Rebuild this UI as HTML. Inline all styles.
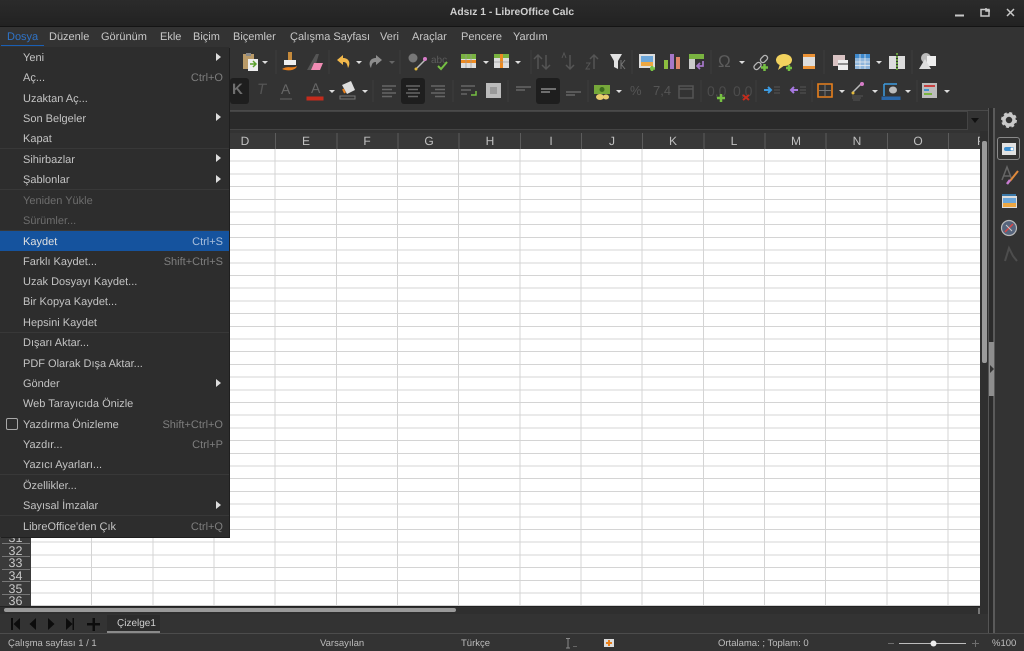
<!DOCTYPE html>
<html lang="tr"><head><meta charset="utf-8"><title>Adsız 1 - LibreOffice Calc</title>
<style>
html,body{margin:0;padding:0;width:1024px;height:651px;overflow:hidden;background:#333}
body{position:relative;font-family:"Liberation Sans",sans-serif;font-size:11px;color:#d0d0d0;text-rendering:geometricPrecision}
.a{position:absolute}
.t{position:absolute;white-space:nowrap;line-height:14px}
.m{position:absolute;top:27px;line-height:20px;font-size:11px;color:#c8c8c8;white-space:nowrap}
.i{position:absolute;left:23px;line-height:14px;font-size:11px;margin-top:1px;color:#c4c4c4;white-space:nowrap}
.k{position:absolute;right:801px;line-height:14px;font-size:11px;margin-top:1px;color:#7e7e7e;white-space:nowrap}
.d{color:#6d6d6d}
.ar{position:absolute;left:216px;width:0;height:0;border-left:5px solid #ddd;border-top:4px solid transparent;border-bottom:4px solid transparent}
.sep{position:absolute;left:0;width:229px;height:1px;background:#383838}
.dd{position:absolute;width:0;height:0;border-top:3px solid #ddd;border-left:3px solid transparent;border-right:3px solid transparent}
.ch{position:absolute;top:133px;height:16px;line-height:17px;text-align:center;color:#c0c0c0;font-size:12px;width:60px}
.rn{position:absolute;left:2px;width:27px;text-align:center;font-size:12.500px;color:#c8c8c8;line-height:12px}
.st{position:absolute;top:637px;line-height:13px;font-size:9.500px;color:#bdbdbd;white-space:nowrap}
svg{position:absolute;overflow:visible}
</style></head><body>

<!-- title bar -->
<div class="a" style="left:0;top:0;width:1024px;height:26px;background:linear-gradient(#2b2b2b,#222)"></div>
<div class="a" style="left:0;top:26px;width:1024px;height:1px;background:#141414"></div>
<div class="t" style="left:0;width:1024px;text-align:center;top:6px;font-weight:bold;font-size:10.300px;color:#cfcfcf">Adsız 1 - LibreOffice Calc</div>
<svg style="left:0;top:0" width="1024" height="46" fill="none" stroke="#c8c8c8">
<path d="M955 15.500H964" stroke-width="2"/>
<path d="M981 9.500H989V16H981ZM986 8V11H990" stroke-width="1.500"/>
<path d="M1007 9L1014 16M1014 9L1007 16" stroke-width="1.500"/>
<path d="M1007.500 34L1013.500 40M1013.500 34L1007.500 40" stroke-width="2" stroke="#ddd"/>
</svg>

<!-- menubar -->
<div class="a" style="left:0;top:27px;width:1024px;height:20px;background:#333"></div>
<div class="a" style="left:1px;top:45px;width:43px;height:1px;background:#1a5fb4"></div>
<div class="m" style="left:7px;color:#2f74c8">Dosya</div>
<div class="m" style="left:49px">Düzenle</div>
<div class="m" style="left:101px">Görünüm</div>
<div class="m" style="left:160px">Ekle</div>
<div class="m" style="left:193px">Biçim</div>
<div class="m" style="left:233px">Biçemler</div>
<div class="m" style="left:290px">Çalışma Sayfası</div>
<div class="m" style="left:380px">Veri</div>
<div class="m" style="left:412px">Araçlar</div>
<div class="m" style="left:461px">Pencere</div>
<div class="m" style="left:513px">Yardım</div>

<!-- toolbars -->
<div class="a" style="left:0;top:76px;width:1024px;height:1px;background:#333"></div>
<div class="a" style="left:230px;top:110px;width:794px;height:1px;background:#4a4a4a"></div>
<div class="a" style="left:230px;top:78px;width:19px;height:26px;background:#1e1e1e;border-radius:3px"></div>
<div class="a" style="left:401px;top:78px;width:24px;height:26px;background:#1e1e1e;border-radius:3px"></div>
<div class="a" style="left:536px;top:78px;width:24px;height:26px;background:#1e1e1e;border-radius:3px"></div>
<div class="t" style="left:232px;top:83px;font-size:15px;font-weight:bold;color:#6e6e6e">K</div>
<div class="t" style="left:257px;top:83px;font-size:15px;font-style:italic;color:#555">T</div>
<div class="t" style="left:281px;top:82px;font-size:14px;color:#666">A</div>
<div class="t" style="left:311px;top:81px;font-size:14px;color:#666">A</div>
<div class="t" style="left:630px;top:84px;font-size:13px;color:#555">%</div>
<div class="t" style="left:653px;top:84px;font-size:13px;color:#555">7,4</div>
<div class="t" style="left:707px;top:84px;font-size:14px;color:#4c4c4c">0,0</div>
<div class="t" style="left:733px;top:84px;font-size:14px;color:#4c4c4c">0,0</div>
<div class="t" style="left:431px;top:54px;font-size:10px;color:#5c5c5c">abc</div>
<div class="t" style="left:718px;top:55px;font-size:17px;color:#5c5c5c">Ω</div>

<svg style="left:0;top:0" width="1024" height="110" fill="none">
<!-- group separators -->
<path d="M276 50V74M329 50V74M400 50V74M531 50V74M632 50V74M711 50V74M824 50V74M912 50V74M373 80V102M453 80V102M508 80V102M588 80V102M701 80V102M756 80V102M812 80V102M917 80V102" stroke="#3d3d3d"/>
<!-- toolbar 1 -->
<path d="M243 54H254V69H243Z" fill="#b99a68"/><path d="M246 53H251V56H246Z" fill="#888"/><path d="M248 59H258V71H248Z" fill="#eee"/><path d="M250 64H256M253 61L256 64L253 67" stroke="#5aa02c" stroke-width="1.500"/>
<path d="M288 52H292V60H288Z" fill="#c58a3c"/><path d="M284 60H296V65H284Z" fill="#eee"/><path d="M282 69C288 65 292 69 297 66L296 68C292 71 287 71 282 69Z" fill="#e8801c"/>
<path d="M307 70L316 54H319L314 70Z" fill="#555"/><path d="M314 63H323L320 70H311Z" fill="#f08cb4"/>
<path d="M337 60L343 55V58C349 58 351 63 348 68C347 63 346 62 343 62V65Z" fill="#f2b84b"/>
<path d="M382 60L376 55V58C370 58 368 63 371 68C372 63 373 62 376 62V65Z" fill="#8d8d8d"/>
<circle cx="413" cy="58" r="4.500" fill="#777"/><path d="M416 69L425 60" stroke="#bbb" stroke-width="1.500"/><circle cx="425" cy="59" r="2" fill="#d77cc8"/><circle cx="416" cy="69" r="1.500" fill="#e2b93b"/>
<path d="M438 66L441 69L447 62" stroke="#76c043" stroke-width="2"/>
<path d="M461 54H476V68H461Z" fill="#ddd"/><path d="M461 54H476V59H461Z" fill="#79b340"/><path d="M461 60H476V63H461Z" fill="#ec8a22"/><path d="M466 54V68M471 54V68" stroke="#999" stroke-width=".7"/>
<path d="M494 54H509V68H494Z" fill="#ddd"/><path d="M494 54H509V58H494Z" fill="#79b340"/><path d="M500 54H503V68H500Z" fill="#ec8a22"/><path d="M494 62H509" stroke="#999" stroke-width=".7"/>
<path d="M538 69V55M534 59L538 55L542 59M546 55V69M542 65L546 69L550 65" stroke="#555" stroke-width="1.500"/>
<path d="M570 55V69M566 65L570 69L574 65" stroke="#555" stroke-width="1.500"/><path d="M562 58L564 53L566 58" stroke="#555"/>
<path d="M594 69V55M590 59L594 55L598 59" stroke="#555" stroke-width="1.500"/><path d="M586 63H590L586 69H590" stroke="#555"/>
<path d="M610 54H622L618 61V69L614 67V61Z" fill="#e2e2e2"/><path d="M621 60V69M621 65L625 60M621 64L625 69" stroke="#777"/>
<path d="M639 54H655V68H639Z" fill="#ddd"/><path d="M641 56H653V66H641Z" fill="#6ca6d9"/><path d="M641 62H653V66H641Z" fill="#eda742"/><path d="M652 66V71M650 68.500H655" stroke="#76c043" stroke-width="2.500"/>
<path d="M664 60H668V69H664Z" fill="#8cbe3f"/><path d="M670 54H674V69H670Z" fill="#a678c9"/><path d="M676 57H680V69H676Z" fill="#e0866a"/>
<path d="M689 54H704V59H689Z" fill="#79b340"/><path d="M689 59H695V69H689Z" fill="#ccc"/><path d="M703 61V66H697M700 63L697 66L700 69" stroke="#a678c9" stroke-width="1.700"/>
<rect x="-4" y="-2.500" width="8" height="5" rx="2.500" transform="translate(757.500 66) rotate(-45)" stroke="#b5b5b5" stroke-width="1.300"/><rect x="-4" y="-2.500" width="8" height="5" rx="2.500" transform="translate(764 59) rotate(-45)" stroke="#b5b5b5" stroke-width="1.300"/><path d="M764.500 64V71M761 67.500H768" stroke="#76c043" stroke-width="2.500"/>
<ellipse cx="784" cy="60" rx="8" ry="6" fill="#f2d25e"/><path d="M780 64L778 70L785 65Z" fill="#f2d25e"/><path d="M789 65V71M786 68H792" stroke="#76c043" stroke-width="2.500"/>
<path d="M803 54H815V69H803Z" fill="#ddd"/><path d="M803 54H815V57H803ZM803 66H815V69H803Z" fill="#ec8a22" opacity=".9"/>
<path d="M833 55H845V60H838V66H833Z" fill="#d9c3c3"/><path d="M838 60H848V70H838Z" fill="#eee"/><path d="M838 64H848" stroke="#333"/>
<path d="M855 54H870V69H855Z" fill="#8fb6dc"/><path d="M855 54H870V58H855Z" fill="#3f89cc"/><path d="M860 54V69M865 54V69M855 62H870M855 65.500H870" stroke="#eee" stroke-width=".7"/>
<path d="M889 56H896V69H889ZM898 56H905V69H898Z" fill="#ddd"/><path d="M897 53V71" stroke="#76c043" stroke-width="1.500" stroke-dasharray="2 1"/>
<circle cx="926" cy="58" r="5" fill="#bbb"/><path d="M927 56H936V66H927Z" fill="#eee"/><path d="M919 69L925 59L931 69Z" fill="#ddd"/>
<!-- toolbar 2 -->
<path d="M280 99H292" stroke="#666"/>
<path d="M307 97H323V100H307Z" fill="#c42b1c" stroke="#c42b1c"/>
<path d="M342 85L351 81L355 90L347 94Z" fill="#ddd"/><path d="M343 89L345 93" stroke="#e8801c" stroke-width="2"/><path d="M340 96H355V99H340Z" stroke="#777"/>
<path d="M382 86H396M382 89.500H392M382 93H396M382 96.500H392M406 86H420M408 89.500H418M406 93H420M408 96.500H418M431 86H445M435 89.500H445M431 93H445M435 96.500H445" stroke="#666" stroke-width="1.500"/>
<path d="M461 86H475M461 90H471M461 94H467" stroke="#666" stroke-width="1.500"/><path d="M476 91V95H471" stroke="#76c043" stroke-width="1.500"/>
<path d="M486 83H501V98H486Z" fill="#bbb"/><path d="M490 87H497V94H490Z" fill="#999"/>
<path d="M516 87H531M516 90H525" stroke="#666" stroke-width="1.500"/>
<path d="M541 89H556M541 92H550" stroke="#888" stroke-width="1.500"/>
<path d="M566 92H581M566 95H575" stroke="#666" stroke-width="1.500"/>
<path d="M594 85H610V94H594Z" fill="#76a83a"/><circle cx="602" cy="89.500" r="2.500" fill="#3d6b1f"/><ellipse cx="600" cy="97" rx="4" ry="3" fill="#e9cd6f"/><ellipse cx="606" cy="97" rx="3" ry="2.500" fill="#e9cd6f"/>
<path d="M679 86H693V98H679ZM679 89H693" stroke="#555" stroke-width="1.500"/>
<path d="M721 94V102M717 98H725" stroke="#76c043" stroke-width="2.500"/>
<path d="M743 95L749 100M749 95L743 100" stroke="#c42b1c" stroke-width="2"/>
<path d="M764 90H771M768 87L771 90L768 93" stroke="#3d9be0" stroke-width="2"/><path d="M774 87H780M774 90H780M774 93H780" stroke="#555"/>
<path d="M798 90H791M794 87L791 90L794 93" stroke="#a678e0" stroke-width="2"/><path d="M800 87H806M800 90H806M800 93H806" stroke="#555"/>
<path d="M818 84H832V97H818Z" stroke="#e8801c" stroke-width="1.600"/><path d="M819 90.500H831M825 85V96" stroke="#777" stroke-width="1"/>
<path d="M852 93L861 84" stroke="#bbb" stroke-width="1.500"/><circle cx="862" cy="84" r="2" fill="#d77cc8"/><circle cx="853" cy="93" r="1.500" fill="#e2b93b"/><path d="M852 96H863M852 98H861M853 100H860" stroke="#555"/>
<path d="M884 84H897M884 84V96" stroke="#3d9be0" stroke-width="1.500"/><path d="M882 97H900V99.500H882Z" fill="#2a66a8" stroke="#2a66a8"/><ellipse cx="893" cy="90" rx="4" ry="3.500" fill="#bbb"/>
<path d="M922 83H937V98H922Z" fill="#bcbcbc"/><path d="M924 85H935V87H924Z" fill="#c84040"/><path d="M924 89H929V91H924Z" fill="#3d8fd0"/><path d="M924 93H932V95H924Z" fill="#79b340"/>
</svg>
<div class="dd" style="left:262px;top:61px"></div><div class="dd" style="left:356px;top:61px"></div><div class="dd" style="left:389px;top:61px;border-top-color:#666"></div><div class="dd" style="left:483px;top:61px"></div><div class="dd" style="left:515px;top:61px"></div><div class="dd" style="left:739px;top:61px"></div><div class="dd" style="left:876px;top:61px"></div>
<div class="dd" style="left:329px;top:90px"></div><div class="dd" style="left:362px;top:90px"></div><div class="dd" style="left:616px;top:90px"></div><div class="dd" style="left:839px;top:90px"></div><div class="dd" style="left:872px;top:90px"></div><div class="dd" style="left:905px;top:90px"></div><div class="dd" style="left:944px;top:90px"></div>

<!-- formula bar -->
<div class="a" style="left:229px;top:111px;width:738px;height:17px;background:#2a2a2a;border:1px solid #444;border-left:none"></div>
<div class="a" style="left:971px;top:118px;width:0;height:0;border-top:5px solid #111;border-left:4px solid transparent;border-right:4px solid transparent"></div>

<!-- column headers -->
<div class="a" style="left:0;top:133px;width:980px;height:16px;background:#383838"></div>
<div class="a" style="left:215px;top:133px;width:765px;height:16px;background:repeating-linear-gradient(90deg,transparent 0,transparent 60.170px,#5c5c5c 60.170px,#5c5c5c 61.170px)"></div>
<div class="ch" style="left:215px">D</div><div class="ch" style="left:276px">E</div><div class="ch" style="left:337px">F</div><div class="ch" style="left:399px">G</div><div class="ch" style="left:460px">H</div><div class="ch" style="left:521px">I</div><div class="ch" style="left:582px">J</div><div class="ch" style="left:643px">K</div><div class="ch" style="left:704px">L</div><div class="ch" style="left:766px">M</div><div class="ch" style="left:827px">N</div><div class="ch" style="left:888px">O</div><div class="t" style="left:977px;top:134px;font-size:12px;color:#c0c0c0;width:3px;overflow:hidden">P</div>

<!-- grid -->
<div class="a" style="left:31px;top:149px;width:949px;height:457px;background-color:#fff;background-image:repeating-linear-gradient(90deg,transparent 0,transparent 60.170px,#d4d4d4 60.170px,#d4d4d4 61.170px),repeating-linear-gradient(180deg,transparent 0,transparent 11.700px,#d4d4d4 11.700px,#d4d4d4 12.700px)"></div>
<div class="a" style="left:0;top:149px;width:31px;height:457px;background:#3a3a3a"></div>
<div class="a" style="left:0;top:606px;width:980px;height:1px;background:#222"></div>
<div class="rn" style="top:532px">31</div><div class="a" style="left:2px;top:543px;width:28px;height:1px;background:#777"></div>
<div class="rn" style="top:545px">32</div><div class="a" style="left:2px;top:556px;width:28px;height:1px;background:#777"></div>
<div class="rn" style="top:557px">33</div><div class="a" style="left:2px;top:569px;width:28px;height:1px;background:#777"></div>
<div class="rn" style="top:570px">34</div><div class="a" style="left:2px;top:581px;width:28px;height:1px;background:#777"></div>
<div class="rn" style="top:583px">35</div><div class="a" style="left:2px;top:594px;width:28px;height:1px;background:#777"></div>
<div class="rn" style="top:595px">36</div>

<!-- vertical scrollbar + sidebar -->
<div class="a" style="left:980px;top:131px;width:9px;height:503px;background:#2f2f2f"></div>
<div class="a" style="left:982px;top:141px;width:5px;height:222px;background:#9a9a9a;border-radius:2px"></div>
<div class="a" style="left:989px;top:108px;width:5px;height:526px;background:#2b2b2b"></div>
<div class="a" style="left:988px;top:108px;width:1px;height:526px;background:#555"></div>
<div class="a" style="left:993px;top:108px;width:2px;height:526px;background:#5a5a5a"></div>
<div class="a" style="left:989px;top:342px;width:5px;height:54px;background:#8e8e8e"></div>
<div class="a" style="left:990px;top:365px;width:0;height:0;border-left:4px solid #333;border-top:4px solid transparent;border-bottom:4px solid transparent"></div>
<div class="a" style="left:995px;top:108px;width:29px;height:526px;background:#333"></div>
<div class="a" style="left:997px;top:137px;width:23px;height:23px;border:1px solid #8a8a8a;border-radius:3px;box-sizing:border-box"></div>
<svg style="left:0;top:0" width="1024" height="270" fill="none">
<circle cx="1009" cy="120" r="5" stroke="#c9c9c9" stroke-width="3.500"/><circle cx="1009" cy="120" r="7" stroke="#c9c9c9" stroke-width="2" stroke-dasharray="3 2.500"/>
<path d="M1002 143H1016V155H1002Z" fill="#e2e2e2"/><rect x="1004" y="147" width="10" height="4" rx="2" fill="#3d8fd0"/><circle cx="1012" cy="149" r="1.500" fill="#fff"/>
<path d="M1002 180L1007 167L1012 180M1004 176H1010" stroke="#666" stroke-width="1.500"/><path d="M1010 181L1018 171" stroke="#e08a3c" stroke-width="2"/><path d="M1007 184L1010 180" stroke="#c77cd0" stroke-width="2.500"/>
<path d="M1002 196H1017V208H1002Z" fill="#ddd"/><path d="M1003 198H1016V207H1003Z" fill="#6ca6d9"/><path d="M1003 203H1016V207H1003Z" fill="#eda742"/><path d="M1002 195H1016" stroke="#3d8fd0" stroke-width="1.500"/>
<circle cx="1009" cy="228" r="7.500" fill="#56647c" stroke="#bbb" stroke-width="1.200"/><path d="M1005 232L1013 224" stroke="#d44" stroke-width="1.500"/><path d="M1006 225L1012 231" stroke="#ccc"/>
<path d="M1005 261L1009 248L1013 256L1017 261" stroke="#4d4d4d" stroke-width="2"/>
</svg>

<!-- horizontal scrollbar -->
<div class="a" style="left:0;top:607px;width:980px;height:7px;background:#2f2f2f"></div>
<div class="a" style="left:4px;top:608px;width:452px;height:4px;background:#9a9a9a;border-radius:2px"></div>
<div class="a" style="left:978px;top:608px;width:2px;height:6px;background:#777"></div>

<!-- tab bar -->
<div class="a" style="left:0;top:614px;width:988px;height:19px;background:#333"></div>
<div class="a" style="left:0;top:633px;width:1024px;height:1px;background:#4c4c4c"></div>
<div class="a" style="left:107px;top:615px;width:53px;height:17px;background:#2c2c2c"></div>
<div class="a" style="left:107px;top:631px;width:53px;height:2px;background:#8a8a8a"></div>
<div class="t" style="left:117px;top:617px;font-size:10px;color:#d0d0d0">Çizelge1</div>
<svg style="left:0;top:0" width="110" height="634" fill="#0c0c0c">
<path d="M11 618H13V630H11ZM20 618V630L13.500 624Z"/>
<path d="M36 618V630L29.500 624Z"/>
<path d="M48 618V630L54.500 624Z"/>
<path d="M66 618V630L72.500 624ZM72.500 618H74V630H72.500Z"/>
<path d="M92.500 618H95V623H100V625.500H95V631H92.500V625.500H87V623H92.500Z"/>
</svg>

<!-- status bar -->
<div class="a" style="left:0;top:634px;width:1024px;height:17px;background:#333"></div>
<div class="st" style="left:8px">Çalışma sayfası 1 / 1</div>
<div class="st" style="left:320px">Varsayılan</div>
<div class="st" style="left:461px">Türkçe</div>
<div class="st" style="left:718px">Ortalama: ; Toplam: 0</div>
<div class="st" style="left:992px">%100</div>
<svg style="left:0;top:630px" width="1024" height="21" fill="none">
<path d="M566 8.500H570M568 8.500V18M566 18H570" stroke="#8a8a8a"/><path d="M573 16.500H577" stroke="#666"/>
<path d="M604 9H614V17H604Z" fill="#ddd"/><path d="M609 10V16M606 13H612" stroke="#e8801c" stroke-width="2"/>
<path d="M888 13.500H894M972 13.500H979M975.500 10V17" stroke="#6e6e6e"/>
<path d="M899 13.500H966" stroke="#bdbdbd"/><circle cx="933.500" cy="13.500" r="3" fill="#eee"/>
</svg>

<!-- File menu -->
<div class="a" style="left:0;top:47px;width:229px;height:490px;background:#2d2d2d;box-shadow:1px 1px 0 #1f1f1f"></div>
<div class="a" style="left:0;top:231px;width:229px;height:20px;background:#15539e"></div>
<div class="sep" style="top:148px"></div><div class="sep" style="top:189px"></div><div class="sep" style="top:230px"></div><div class="sep" style="top:332px"></div><div class="sep" style="top:474px"></div><div class="sep" style="top:515px"></div>

<div class="i" style="top:50px">Yeni</div><div class="ar" style="top:53px"></div>
<div class="i" style="top:70px">Aç...</div><div class="k" style="top:70px">Ctrl+O</div>
<div class="i" style="top:91px">Uzaktan Aç...</div>
<div class="i" style="top:111px">Son Belgeler</div><div class="ar" style="top:113px"></div>
<div class="i" style="top:131px">Kapat</div>
<div class="i" style="top:152px">Sihirbazlar</div><div class="ar" style="top:154px"></div>
<div class="i" style="top:172px">Şablonlar</div><div class="ar" style="top:175px"></div>
<div class="i d" style="top:193px">Yeniden Yükle</div>
<div class="i d" style="top:213px">Sürümler...</div>
<div class="i" style="top:234px;color:#e0e0e0">Kaydet</div><div class="k" style="top:234px;color:#a9bfdc">Ctrl+S</div>
<div class="i" style="top:254px">Farklı Kaydet...</div><div class="k" style="top:254px">Shift+Ctrl+S</div>
<div class="i" style="top:274px">Uzak Dosyayı Kaydet...</div>
<div class="i" style="top:294px">Bir Kopya Kaydet...</div>
<div class="i" style="top:315px">Hepsini Kaydet</div>
<div class="i" style="top:335px">Dışarı Aktar...</div>
<div class="i" style="top:356px">PDF Olarak Dışa Aktar...</div>
<div class="i" style="top:376px">Gönder</div><div class="ar" style="top:379px"></div>
<div class="i" style="top:396px">Web Tarayıcıda Önizle</div>
<div class="a" style="left:6px;top:418px;width:10px;height:10px;border:1px solid #a8a8a8;border-radius:2px"></div>
<div class="i" style="top:417px">Yazdırma Önizleme</div><div class="k" style="top:417px">Shift+Ctrl+O</div>
<div class="i" style="top:437px">Yazdır...</div><div class="k" style="top:437px">Ctrl+P</div>
<div class="i" style="top:457px">Yazıcı Ayarları...</div>
<div class="i" style="top:478px">Özellikler...</div>
<div class="i" style="top:498px">Sayısal İmzalar</div><div class="ar" style="top:501px"></div>
<div class="i" style="top:519px">LibreOffice'den Çık</div><div class="k" style="top:519px">Ctrl+Q</div>
</body></html>
